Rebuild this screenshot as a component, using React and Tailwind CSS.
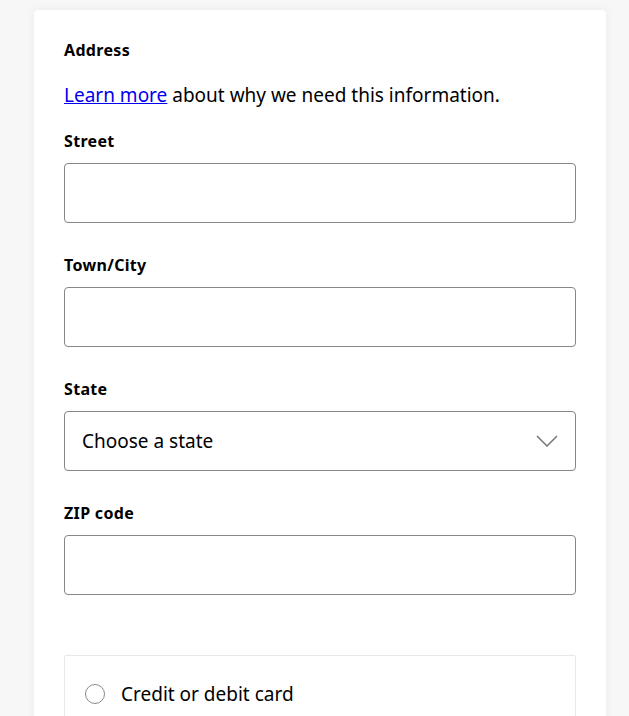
export default function App() {
  const fields = [
    { label: 'Street' },
    { label: 'Town/City' },
    { label: 'State', select: true },
    { label: 'ZIP code' },
  ];

  return (
    <div className="min-h-[716px] bg-[#f7f7f7] pt-[10px] pl-[34px] pr-[23px] font-['Noto_Sans',sans-serif] text-black">
      <div className="bg-white rounded-[4px] shadow-[0_0_10px_rgba(0,0,0,0.06)] px-[30px] pt-[28px] pb-[60px]">
        <h2 className="text-[16px] leading-[24px] font-bold tracking-[0.02em]">Address</h2>
        <p className="mt-[21px] text-[19px] leading-[24px]">
          <a href="#" className="text-[#0000ee] underline">Learn more</a> about why we need this information.
        </p>

        {fields.map((f, i) => (
          <div key={f.label} className={i === 0 ? 'mt-[22px]' : 'mt-[30px]'}>
            <label className="block text-[16px] leading-[24px] font-bold tracking-[0.02em]">{f.label}</label>
            {f.select ? (
              <div className="mt-[10px] h-[60px] border border-[#878787] rounded-[4px] flex items-center justify-between pl-[17px] pr-[17px]">
                <span className="text-[19px]">Choose a state</span>
                <svg width="22" height="12" viewBox="0 0 22 12" fill="none">
                  <path d="M1 1l10 10L21 1" stroke="#767676" strokeWidth="1.5" />
                </svg>
              </div>
            ) : (
              <input
                type="text"
                className="mt-[10px] block w-full h-[60px] border border-[#878787] rounded-[4px] px-[17px] text-[19px] outline-none"
              />
            )}
          </div>
        ))}

        <div className="mt-[60px] border border-[#e8e8e8] rounded-[2px] pt-[28px] pb-[40px] px-[20px]">
          <label className="flex items-center gap-[16px] h-[20px]">
            <span className="w-[20px] h-[20px] rounded-full border border-[#8a8a8a] bg-white" />
            <span className="text-[19px]">Credit or debit card</span>
          </label>
        </div>
      </div>
    </div>
  );
}
